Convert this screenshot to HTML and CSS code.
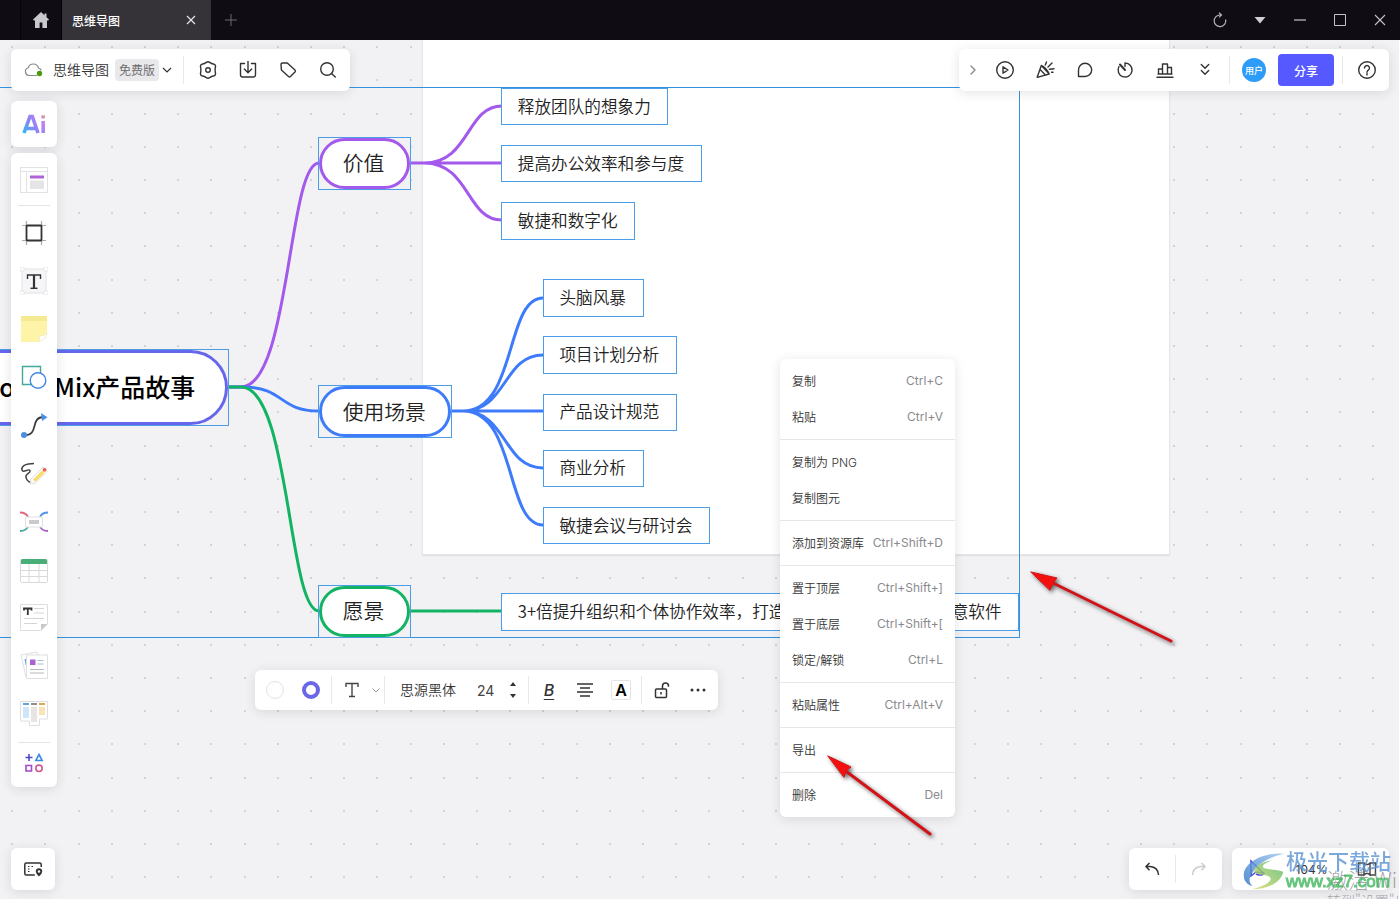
FILE: index.html
```html
<!DOCTYPE html>
<html lang="zh-CN">
<head>
<meta charset="utf-8">
<title>思维导图</title>
<link rel="stylesheet" href="styles.css">
</head>
<body>
<div class="app">
  <header class="titlebar">
    <button class="home" aria-label="主页"><svg width="18" height="18" viewBox="0 0 18 18"><path fill="#c9c8cb" d="M9 1 1 8.600l.8 1H3V17h4.600v-5.500h2.800V17H15V9.600h1.200l.8-1-2.500-2.400V2.500h-2v1.800z"/></svg></button>
    <div class="tab"><span>思维导图</span><button aria-label="关闭标签"><svg width="10" height="10" viewBox="0 0 10 10"><path d="m1 1 8 8M9 1 1 9" stroke="#e4e4e6" stroke-width="1.200"/></svg></button></div>
    <button class="newtab" aria-label="新建标签"><svg width="12" height="12" viewBox="0 0 12 12"><path d="M6 0v12M0 6h12" stroke="#6d6b70"/></svg></button>
    <div class="window-buttons">
      <button aria-label="刷新"><svg width="16" height="16" viewBox="0 0 16 16" fill="none" stroke="#b5b4b8" stroke-width="1.200"><path d="M13.600 7.500A5.800 5.800 0 1 1 8 3h1.500M7 .8 9.500 3 7 5.400"/></svg></button>
      <button aria-label="菜单"><svg width="12" height="8" viewBox="0 0 12 8"><path d="M.5 1h11L6 7.500z" fill="#cfced2"/></svg></button>
      <button aria-label="最小化"><svg width="12" height="12" viewBox="0 0 12 12"><path d="M0 6h12" stroke="#c5c4c8" stroke-width="1.200"/></svg></button>
      <button aria-label="最大化"><svg width="12" height="12" viewBox="0 0 12 12"><path d="M.5.5h11v11H.5z" fill="none" stroke="#c5c4c8"/></svg></button>
      <button aria-label="关闭"><svg width="12" height="12" viewBox="0 0 12 12"><path d="m1 1 10 10M11 1 1 11" stroke="#c5c4c8" stroke-width="1.100"/></svg></button>
    </div>
  </header>

  <main class="canvas">
    <svg class="dots" aria-hidden="true"><defs><pattern id="grid" x="11" y="6" width="166" height="166" patternUnits="userSpaceOnUse">
      <path id="row" fill="#d3d3d6" d="M0 0h2v2H0zM33 0h2v2h-2zM67 0h2v2h-2zM100 0h2v2h-2zM133 0h2v2h-2z"/>
      <use href="#row" y="33"/><use href="#row" y="67"/><use href="#row" y="100"/><use href="#row" y="133"/></pattern></defs>
      <rect width="100%" height="100%" fill="url(#grid)"/></svg>
    <div class="sheet"></div>
    <div class="selection"></div>
    <svg class="edges" width="1400" height="860" viewBox="0 40 1400 860" fill="none" stroke-width="3" aria-hidden="true">
      <g stroke="#a259ec"><path d="M229 387h12C290 387 288 163 319 163M410 163h92M410 163h14C470 163 466 106 502 106M424 163C470 163 466 220 502 220"/></g>
      <g stroke="#3e7bfa"><path d="M229 387h14C285 387 278 411 319 411M451 411h92M463 411C517 411 505 298 543 298M463 411C507 411 503 355 543 355M463 411C507 411 503 468 543 468M463 411C517 411 505 525 543 525"/></g>
      <g stroke="#12b362"><path d="M228 387h13C290 387 288 611 319 611M410 611h92"/></g>
    </svg>
    <div class="map">
      <div class="node root"><span>BoardMix产品故事</span></div>
      <div class="node branch value"><span>价值</span></div>
      <div class="node branch scene"><span>使用场景</span></div>
      <div class="node branch vision"><span>愿景</span></div>
      <div class="node leaf v1"><span>释放团队的想象力</span></div>
      <div class="node leaf v2"><span>提高办公效率和参与度</span></div>
      <div class="node leaf v3"><span>敏捷和数字化</span></div>
      <div class="node leaf s1"><span>头脑风暴</span></div>
      <div class="node leaf s2"><span>项目计划分析</span></div>
      <div class="node leaf s3"><span>产品设计规范</span></div>
      <div class="node leaf s4"><span>商业分析</span></div>
      <div class="node leaf s5"><span>敏捷会议与研讨会</span></div>
      <div class="node leaf g1"><span>3+倍提升组织和个体协作效率，打造新一代多人实时在线创意软件</span></div>
    </div>

    <div class="panel filebar">
      <svg class="cloud" width="20" height="16" viewBox="0 0 20 16" fill="none"><path d="M13 13.500H5A4 4 0 0 1 4.300 5.700 5.300 5.300 0 0 1 14.500 6a3.500 3.500 0 0 1 2.800 2.500" stroke="#8b8b8f" stroke-width="1.200"/><circle cx="15.500" cy="11.500" r="2.700" fill="#4a9a10"/></svg>
      <span class="filename">思维导图</span>
      <button class="plan">免费版</button>
      <button class="chev" aria-label="展开"><svg width="10" height="8" viewBox="0 0 10 8"><path d="m1 2 4 4 4-4" fill="none" stroke="#333" stroke-width="1.200"/></svg></button>
      <i class="rule"></i>
      <button class="tool" aria-label="设置"><svg width="20" height="20" viewBox="0 0 20 20"><path d="M8.300 2.400Q10 1.200 11.700 2.400 13.600 3.900 15.400 4 17.500 4.300 17.600 6.300 17.100 8.200 17.100 10 17.100 11.800 17.600 13.700 17.500 15.700 15.400 16 13.600 16.100 11.700 17.600 10 18.800 8.300 17.600 6.400 16.100 4.600 16 2.500 15.700 2.400 13.700 2.900 11.800 2.900 10 2.900 8.200 2.400 6.300 2.500 4.300 4.600 4 6.400 3.900 8.300 2.400z"/><circle cx="10" cy="10" r="2.300"/></svg></button>
      <button class="tool" aria-label="导出"><svg width="20" height="20" viewBox="0 0 20 20"><path d="M6.500 3.500h-4v11.300q0 2.200 2.200 2.200h10.600q2.200 0 2.200-2.200V3.500h-4M10 1.500v11M6.300 9l3.700 3.700L13.700 9"/></svg></button>
      <button class="tool" aria-label="标签"><svg width="20" height="20" viewBox="0 0 20 20"><path d="M3 4.300Q3 3 4.300 3H9.300L17.200 10.300Q17.700 11 17.200 11.700L12.200 16.800Q11.500 17.400 10.800 16.800L3.400 10z"/></svg></button>
      <button class="tool" aria-label="搜索"><svg width="20" height="20" viewBox="0 0 20 20"><circle cx="9" cy="9" r="6.300"/><path d="m13.500 13.500 3.800 3.600"/></svg></button>
    </div>

    <div class="panel actionbar">
      <button class="tool narrow" aria-label="收起"><svg width="8" height="12" viewBox="0 0 8 12"><path d="m2 2 4 4-4 4" stroke="#8a8a8e"/></svg></button>
      <button class="tool" aria-label="演示"><svg width="20" height="20" viewBox="0 0 20 20"><circle cx="10" cy="10" r="8.300"/><path d="m8 6.800 5 3.200-5 3.200z"/></svg></button>
      <button class="tool" aria-label="庆祝"><svg width="20" height="20" viewBox="0 0 20 20"><path d="M6.300 5.500 2.200 17.300l12-3.300zM5 9.500l5.500 5.400M6.300 5.500q5 2.500 7.900 8.500M10.300 5l1.200-3M13 7l4-4M14.500 9.300 19 8.700M16.500 12.300h1.500"/></svg></button>
      <button class="tool" aria-label="评论"><svg width="20" height="20" viewBox="0 0 20 20"><path d="M3.500 16.500V10a6.600 6.600 0 1 1 6.600 6.500z"/></svg></button>
      <button class="tool" aria-label="计时"><svg width="20" height="20" viewBox="0 0 20 20"><path d="M10 6.500V3a7 7 0 1 1-6 3.500"/><path d="m5 4.500 5 5.500" stroke-width="2"/></svg></button>
      <button class="tool" aria-label="投票"><svg width="20" height="20" viewBox="0 0 20 20"><path d="M2 17.200h16M3.500 14V9h4v5M7.500 14V4h5v10M12.500 14V7.500h4V14M3 14h14"/></svg></button>
      <button class="tool" aria-label="更多工具"><svg width="20" height="20" viewBox="0 0 20 20"><path d="m6.300 4.500 3.700 3.700 3.700-3.700M6.300 10.500l3.700 3.700 3.700-3.700"/></svg></button>
      <i class="rule"></i>
      <button class="avatar">用户</button>
      <button class="share">分享</button>
      <i class="rule"></i>
      <button class="tool" aria-label="帮助"><svg width="20" height="20" viewBox="0 0 20 20"><circle cx="10" cy="10" r="8.300"/><path d="M7.500 8a2.500 2.500 0 1 1 3.800 2.100Q10 11 10 12.200M10 13.500v1.500"/></svg></button>
    </div>

    <nav class="side">
      <button class="panel ai" aria-label="AI"><svg width="28" height="26" viewBox="0 0 28 26"><defs><linearGradient id="aig" gradientUnits="userSpaceOnUse" x1="4" y1="20" x2="26" y2="5"><stop offset="0" stop-color="#3bb4ee"/><stop offset=".4" stop-color="#8d83f7"/><stop offset=".8" stop-color="#c583ee"/><stop offset="1" stop-color="#f5a66d"/></linearGradient></defs><g fill="none" stroke="url(#aig)" stroke-width="3.600"><path d="M4 22 10 5.500h2.400L18 22M7 17.500h8"/><path d="M23.200 10v12M23.200 4.200v3.400"/></g></svg></button>
      <div class="panel toolbox">
        <button aria-label="模板"><svg viewBox="0 0 28 28"><rect x=".5" y="1.500" width="27" height="25" fill="#fff" stroke="#e2e2e5"/><path d="M.5 5.500h27M6.500 5.500v21" stroke="#e2e2e5"/><path d="M10 9.500h14v3H10z" fill="#ae63d8"/><path d="M10 14.500h14V23H10z" fill="#e5e5e8"/></svg></button>
        <i class="hr"></i>
        <button aria-label="画框"><svg viewBox="0 0 28 28" fill="none"><path d="M6.500 6.500h15v15h-15z" stroke="#333" stroke-width="1.800"/><path d="M6.500 2v3M21.500 2v3M6.500 23v3M21.500 23v3M2 6.500h3M2 21.500h3M23 6.500h3M23 21.500h3" stroke="#aaa" stroke-width="1.200"/></svg></button>
        <button aria-label="文本"><svg viewBox="0 0 28 28" fill="none"><path d="M2 2h24v24H2z" fill="#f6f6f8" stroke="#e2e2e5"/><path d="M0 0h4v4H0zM24 0h4v4h-4zM0 24h4v4H0zM24 24h4v4h-4z" fill="#fff" stroke="#e8e8ea"/><path d="M7.500 12V8h13v4" stroke="#333" stroke-width="1.400"/><path d="M14 8v13" stroke="#333" stroke-width="2.200"/><path d="M10.500 21.300h7" stroke="#333" stroke-width="1.400"/></svg></button>
        <button aria-label="便签"><svg viewBox="0 0 28 28"><path d="M1 1h26v17q-1 8-9 9H1z" fill="#fdf4a7"/><path d="M1 1h26v5H1z" fill="#f5e992"/><path d="M18 27q2-2 1.500-6 5 0 7.500-3-1 7-9 9z" fill="#fff" stroke="#e6e1c0" stroke-width=".6"/></svg></button>
        <button aria-label="形状"><svg viewBox="0 0 28 28" fill="#fff" stroke-width="1.400"><path d="M2.500 3.500h18v18h-18z" stroke="#41a89b"/><circle cx="18" cy="17.500" r="7.800" stroke="#4388e8"/></svg></button>
        <button aria-label="连线"><svg viewBox="0 0 28 28"><path d="M4 24c16 1 5-18 20-18" fill="none" stroke="#3b3b3b" stroke-width="1.800"/><circle cx="4" cy="24" r="3" fill="#4b8ee5"/><path d="m21 2 6.500 4.200L22 10z" fill="#4b8ee5"/></svg></button>
        <button aria-label="画笔"><svg viewBox="0 0 28 28" fill="none"><path d="M14 4.500C5 4.500 1 7.500 2 11c1 3.500 7-2 8 .5 1 3-5 3-4 7 .8 3.500 4 5 6 5" stroke="#444" stroke-width="1.500"/><path d="m11 20 12-12 4.500 4L15.500 24l-5 1z" fill="#fff" stroke="#dedede"/><path d="m13 20.500 9-9 2.500 2.500-9 9z" fill="#f8dc70"/><circle cx="24.500" cy="10.800" r="1.900" fill="#eb5e45"/></svg></button>
        <button aria-label="思维导图"><svg viewBox="0 0 28 28" fill="none" stroke-width="1.800"><path d="M0 5.500q6 0 8 4.500" stroke="#e46482"/><path d="M28 5.500q-6 0-8 4.500" stroke="#4e91e8"/><path d="M0 24q6 0 8-4.500" stroke="#3fa99b"/><path d="M28 24q-6 0-8-4.500" stroke="#a65fc8"/><rect x="5.500" y="10" width="17" height="10" rx="1" fill="#fff" stroke="#e0e0e3" stroke-width="1"/><path d="M9 13h10v4H9z" fill="#cacace"/></svg></button>
        <button aria-label="表格"><svg viewBox="0 0 28 28"><rect x=".5" y="4.500" width="27" height="23" rx="1" fill="#fff" stroke="#d9d9dc"/><path d="M9 9v18M19 9v18M1 15.500h26M1 21.500h26" stroke="#d9d9dc"/><path d="M1 5.500Q1 4 2.500 4h23Q27 4 27 5.500V9H1z" fill="#49ad78"/></svg></button>
        <button aria-label="文档"><svg viewBox="0 0 28 28" fill="none"><path d="M.5 1.500h27V21L21 27.500H.5z" fill="#fff" stroke="#dedee1"/><path d="M27.500 21H21v6.500z" fill="#c9c9cd"/><path d="M4 7.500V5.500h7.500v2M7.800 5.500v6.500" stroke="#333" stroke-width="1.800"/><path d="M14 5.500h10M14 10h10M4 15.500h20M4 20.500h13" stroke="#d5d5d9"/></svg></button>
        <button aria-label="卡片"><svg viewBox="0 0 28 28"><path d="m1 4 16-3 5 22-16 3z" fill="#fff" stroke="#e0e0e3"/><path d="M4.500 8h3v6h-2z" fill="#6fa6d8"/><rect x="6.500" y="4" width="21" height="23.500" fill="#fff" stroke="#e0e0e3"/><path d="M10 8.500h5.500V14H10z" fill="#a965cf"/><path d="M17.500 9.500h6M17.500 13h6" stroke="#a9bccd"/><path d="M10 18.500h14M10 22h14" stroke="#b8b8bd"/></svg></button>
        <button aria-label="看板"><svg viewBox="0 0 28 28"><path d="M.5 2.500h27V20h-8v6.500h-10V22h-9z" fill="#fff" stroke="#dedee1"/><path d="M3 4h6v2H3z" fill="#5da3df"/><path d="M11 4h6v2h-6z" fill="#8e8e93"/><path d="M19 4h6v2h-6z" fill="#e0a94b"/><path d="M3 8h6v11H3z" fill="#cfe5f8"/><path d="M11 8h6v15h-6z" fill="#e8e4e4"/><path d="M19 8h6v8h-6z" fill="#fae3b9"/></svg></button>
        <i class="hr"></i>
        <button class="last" aria-label="更多"><svg viewBox="0 0 28 28" fill="none" stroke-width="1.600"><path d="M9 5v7M5.500 8.500h7" stroke="#4c49c9"/><path d="m19 5.500 3.200 6h-6.400z" stroke="#3f8be0"/><path d="M6 16.500h5.500V22H6z" stroke="#a04cc9"/><circle cx="19" cy="19.300" r="3.200" stroke="#d6578f"/></svg></button>
      </div>
    </nav>

    <div class="panel formatbar">
      <button class="slot" aria-label="填充"><svg width="20" height="20" viewBox="0 0 20 20"><circle cx="10" cy="10" r="8.500" fill="#fff" stroke="#e2e2e5"/></svg></button>
      <button class="slot" aria-label="边框"><svg width="20" height="20" viewBox="0 0 20 20"><circle cx="10" cy="10" r="7" fill="#fff" stroke="#6b68e8" stroke-width="4"/></svg></button>
      <i class="rule"></i>
      <button class="slot" aria-label="文字"><svg width="20" height="20" viewBox="0 0 20 20" fill="none" stroke="#444" stroke-width="1.400"><path d="M4 7V3.500h12V7M10 3.500v13M7 16.500h6"/></svg></button>
      <button class="thin" aria-label="文字样式"><svg width="8" height="8" viewBox="0 0 8 8" fill="none" stroke="#999"><path d="m.5 2.500 3.500 3.500 3.500-3.500"/></svg></button>
      <i class="rule"></i>
      <select class="font" aria-label="字体"><option>思源黑体</option></select>
      <input class="size" aria-label="字号" value="24">
      <button class="thin spinner" aria-label="调整字号"><svg width="8" height="18" viewBox="0 0 8 18" fill="#333"><path d="M1 5h6L4 1zM1 13h6l-3 4z"/></svg></button>
      <i class="rule"></i>
      <button class="slot bold">B</button>
      <button class="slot" aria-label="对齐"><svg width="20" height="20" viewBox="0 0 20 20" stroke="#333" stroke-width="1.300"><path d="M2 4h16M5 8h10M2 12h16M5 16h10"/></svg></button>
      <button class="slot color"><span>A</span></button>
      <i class="rule"></i>
      <button class="slot" aria-label="解锁"><svg width="20" height="20" viewBox="0 0 20 20" fill="none" stroke="#333" stroke-width="1.500"><rect x="3.500" y="9" width="11" height="8.500" rx="1"/><path d="M10.500 9V6a3 3 0 0 1 6 0v.8M9 12v2.500"/></svg></button>
      <button class="slot" aria-label="更多"><svg width="18" height="4" viewBox="0 0 18 4" fill="#333"><circle cx="3" cy="2" r="1.500"/><circle cx="9" cy="2" r="1.500"/><circle cx="15" cy="2" r="1.500"/></svg></button>
    </div>

    <div class="panel menu">
      <div class="group"><button><span>复制</span><kbd>Ctrl+C</kbd></button><button><span>粘贴</span><kbd>Ctrl+V</kbd></button></div>
      <div class="group"><button><span>复制为 PNG</span></button><button><span>复制图元</span></button></div>
      <div class="group"><button><span>添加到资源库</span><kbd>Ctrl+Shift+D</kbd></button></div>
      <div class="group"><button><span>置于顶层</span><kbd>Ctrl+Shift+]</kbd></button><button><span>置于底层</span><kbd>Ctrl+Shift+[</kbd></button><button><span>锁定/解锁</span><kbd>Ctrl+L</kbd></button></div>
      <div class="group"><button><span>粘贴属性</span><kbd>Ctrl+Alt+V</kbd></button></div>
      <div class="group"><button><span>导出</span></button></div>
      <div class="group"><button><span>删除</span><kbd>Del</kbd></button></div>
    </div>

    <button class="panel minimap" aria-label="页面"><svg width="20" height="20" viewBox="0 0 20 20" fill="none" stroke="#333" stroke-width="1.500"><path d="M18.200 8V5.500q0-1.500-1.500-1.500H3.300Q1.800 4 1.800 5.500v9q0 1.500 1.500 1.500h8.500"/><path d="M5 7.500h1.500M5 10h1.500M5 12.500h1.500M8.500 7.500H10" stroke-width="1.200"/><path d="M16 17.500q-3.200-3-3.200-5a3.200 3.200 0 0 1 6.400 0q0 2-3.200 5z" fill="#333" stroke="none"/><circle cx="16" cy="12.500" r="1.200" fill="#fff" stroke="none"/></svg></button>

    <div class="corner">
      <div class="panel history">
        <button aria-label="撤销"><svg width="18" height="18" viewBox="0 0 18 18" fill="none" stroke="#333" stroke-width="1.500"><path d="M6.500 3 3 6.500l3.500 3.700M3 6.500h4Q15 7 15.500 15"/></svg></button>
        <i class="rule"></i>
        <button aria-label="重做"><svg width="18" height="18" viewBox="0 0 18 18" fill="none" stroke="#ccc" stroke-width="1.500"><path d="M11.500 3 15 6.500l-3.500 3.700M15 6.500h-4Q3 7 2.500 15"/></svg></button>
      </div>
      <div class="panel zoombar">
        <button aria-label="选择"><svg width="18" height="20" viewBox="0 0 18 20" fill="none" stroke="#4a4ae0" stroke-width="1.500"><path d="M3 2v15l5-4 7 1zM8 15q7 3 8-2"/></svg></button>
        <button class="percent">104%</button>
        <button aria-label="导航"><svg width="20" height="16" viewBox="0 0 20 16" fill="none" stroke="#444" stroke-width="1.400"><path d="M7 14H1.500V2H7v12l2-1.500h2l2 1.500V2h5.500v12H13M7 2l2 1.500h2L13 2"/></svg></button>
      </div>
    </div>

    <div class="activate"><p>激活 Windows</p><small>转到"设置"以激活</small></div>
    <div class="brand">
      <svg width="46" height="40" viewBox="0 0 48 40"><defs><linearGradient id="bl" x1="0" y1="1" x2="1" y2="0"><stop offset="0" stop-color="#2a6fc4"/><stop offset="1" stop-color="#9cc8ee"/></linearGradient><linearGradient id="gr" x1="0" y1="1" x2="1" y2="0"><stop offset="0" stop-color="#e0d96a"/><stop offset="1" stop-color="#4cb866"/></linearGradient></defs><path d="M46 2C24 0 3 12 4 25c0 5 3 9 9 11-4-4-4-9 0-14C18 13 29 6 46 2z" fill="url(#bl)"/><path d="M33 9C22 10 13 17 15 21c3 4 17 2 17 7 0 4-8 8-20 11 17 0 31-7 33-18-5-3-18-2-21-5-1-2 3-5 9-7z" fill="url(#gr)"/></svg>
      <div><strong>极光下载站</strong><span>www.xz7.com</span></div>
    </div>
    <svg class="arrows" width="1400" height="860" viewBox="0 40 1400 860" aria-hidden="true"><g class="arrow"><path d="M1053 583 1171 641"/><path d="m1031 572 26 6-4 5-3 7z" class="head"/></g><g class="arrow"><path d="M847 772 930 834"/><path d="m828 756 23 11-5 4-2 6z" class="head"/></g></svg>
  </main>
</div>
</body>
</html>
```

FILE: styles.css
```css
* { box-sizing: border-box; }
body { margin: 0; color: #333; font-family: Inter, "Noto Sans CJK SC", sans-serif; font-size: 12px; }
button, input, select { margin: 0; padding: 0; border: 0; background: none; font: inherit; color: inherit; appearance: none; }
button { display: flex; align-items: center; justify-content: center; cursor: pointer; }
svg { display: block; flex: none; }
.app { display: grid; grid-template-rows: 40px 1fr; height: 100vh; }

.titlebar { display: flex; background: #0f0c13; padding-left: 20px; }
.home { width: 42px; border: solid #050407; border-width: 0 1px; }
.tab { display: flex; align-items: center; justify-content: space-between; width: 149px; padding: 0 15px 0 10px; background: #353338; color: #fff; font-weight: 500; }
.newtab { width: 40px; }
.window-buttons { display: flex; margin-left: auto; }
.window-buttons button { width: 40px; }

.canvas { position: relative; overflow: hidden; background: #f2f2f4; border: solid #fff; border-width: 0 1px 1px 0; }
.dots { position: absolute; width: 100%; height: 100%; }
.sheet { position: absolute; left: 422px; top: 0; width: 748px; height: 515px; background: #fff; border: solid #e6e6e9; border-width: 0 1px 1px; box-shadow: 0 1px 1px #e2e2e5; }
.selection { position: absolute; left: 0; top: 47px; width: 1020px; height: 551px; border: solid #3193e0; border-width: 1px 1px 1px 0; }
.edges, .arrows { position: absolute; left: 0; top: 0; }

/* The board is shown at 104% */
.map { position: absolute; left: 0; top: 0; zoom: 1.04; font-family: "Noto Sans CJK SC", sans-serif; font-weight: 350; color: #222; white-space: nowrap; }
.node { position: absolute; border: 1px solid #4a9ee8; }
.node span { display: flex; align-items: center; justify-content: center; height: 100%; padding: 0 2px 2px 0; background: #fff; }
.root { left: -47px; top: 297px; width: 267px; height: 74px; font-size: 24px; font-weight: 500; color: #000; }
.root span { border: 3px solid #6566ec; border-radius: 40px; }
.branch { left: 306px; width: 89px; height: 51px; font-size: 20px; }
.branch span { border: 3px solid #a259ec; border-radius: 26px; }
.value { top: 93px; }
.scene { top: 332px; width: 129px; }
.scene span { border-color: #3e7bfa; }
.vision { top: 524px; }
.vision span { border-color: #12b362; }
.leaf { height: 36px; font-size: 16px; }
.leaf span { padding: 0 16px 2px 15px; border-radius: 6px; }
.v1, .v2, .v3, .g1 { left: 482px; }
.s1, .s2, .s3, .s4, .s5 { left: 522px; }
.v1 { top: 46px; }
.v2 { top: 101px; }
.v3 { top: 156px; }
.s1 { top: 230px; }
.s2 { top: 285px; }
.s3 { top: 340px; }
.s4 { top: 394px; }
.s5 { top: 449px; }
.g1 { top: 532px; }

.panel { background: #fff; border-radius: 6px; box-shadow: 0 2px 12px rgba(30, 30, 50, .12); }
.rule { flex: none; width: 1px; height: 28px; background: #e8e8ea; }
.tool { width: 40px; height: 42px; }
.tool svg { fill: none; stroke: #333; stroke-width: 1.4; stroke-linejoin: round; stroke-linecap: round; }
.narrow { width: 24px; }

.filebar, .actionbar { position: absolute; top: 9px; display: flex; align-items: center; height: 42px; }
.filebar { left: 11px; padding: 0 2px 0 13px; }
.filename { margin: 0 6px 0 9px; padding-bottom: 2px; font-size: 14px; font-weight: 350; }
.plan { width: 44px; height: 22px; padding-bottom: 2px; border-radius: 4px; background: #e9e9ec; color: #666; font-weight: 350; }
.chev { width: 16px; height: 22px; }
.filebar .rule { margin: 0 4px 0 8px; }
.actionbar { right: 10px; padding: 0 2px; }
.actionbar .rule { margin: 0 4px; }
.avatar { width: 24px; height: 24px; margin: 0 12px 0 8px; border-radius: 50%; background: #2d9cf8; color: #fff; font-size: 9px; font-weight: 500; }
.share { width: 56px; height: 32px; margin-right: 4px; border-radius: 4px; background: #5559ff; color: #fff; font-weight: 500; }

.side { position: absolute; left: 11px; top: 61px; display: flex; flex-direction: column; gap: 6px; width: 46px; }
.ai { height: 46px; }
.toolbox { padding: 3px 0 4px; }
.toolbox button { width: 46px; height: 48px; }
.toolbox button svg { width: 28px; height: 28px; }
.toolbox .last { height: 40px; }
.hr { display: block; height: 1px; margin: 1px 7px 3px; background: #e4e4e7; }
.hr:nth-last-of-type(1) { margin: 5px 7px 0; }

.formatbar { position: absolute; left: 255px; top: 630px; display: flex; align-items: center; height: 40px; padding: 0 2px; }
.formatbar .rule { margin: 0 2px; }
.slot { width: 36px; height: 36px; }
.thin { width: 12px; height: 36px; }
.spinner { margin-right: 7px; }
.font { width: 77px; margin-left: 13px; padding-bottom: 2px; font-size: 14px; font-weight: 350; }
.size { width: 30px; font-size: 14px; color: #444; }
.bold { font-size: 16px; font-style: italic; font-weight: 500; text-decoration: underline; text-underline-offset: 3px; }
.color span { width: 20px; height: 20px; border: 1px solid #e4e4e7; border-radius: 2px; color: #000; font-size: 16px; font-weight: 600; line-height: 19px; }

.menu { position: absolute; left: 780px; top: 319px; width: 175px; }
.group { padding: 4px 0; }
.group + .group { border-top: 1px solid #e6e6e8; }
.group button { justify-content: space-between; width: 100%; height: 36px; padding: 0 12px 2px; white-space: nowrap; font-weight: 350; }
kbd { color: #8a8a8e; font-family: Inter, sans-serif; font-weight: 400; }

.minimap { position: absolute; left: 11px; bottom: 9px; width: 44px; height: 42px; }
.corner { position: absolute; right: 10px; bottom: 9px; display: flex; gap: 10px; height: 42px; }
.history, .zoombar { display: flex; align-items: center; }
.history button { width: 46px; height: 42px; }
.zoombar { width: 157px; padding: 0 12px 0 16px; justify-content: space-between; }

.activate { position: absolute; left: 1327px; bottom: -10px; color: rgba(110, 110, 115, .6); white-space: nowrap; font-family: "Noto Sans CJK SC", sans-serif; font-weight: 300; }
.activate p { margin: 0; font-size: 21px; line-height: 24px; }
.activate small { display: block; font-size: 14px; line-height: 18px; }
.brand { position: absolute; right: 8px; bottom: 6px; display: flex; align-items: center; opacity: .8; }
.brand strong, .brand span { display: block; font-family: "Noto Sans CJK SC", sans-serif; }
.brand strong { color: #5b93d3; font-size: 21px; line-height: 22px; font-weight: 500; }
.brand span { color: #3fb65c; font-family: "Liberation Sans", sans-serif; font-size: 17px; line-height: 22px; -webkit-text-stroke: 1px; }

.arrow { fill: none; stroke: #d31217; stroke-width: 3; stroke-linecap: round; filter: drop-shadow(2px 2px 2px rgba(0, 0, 0, .6)); }
.head { fill: #f3110f; stroke-width: 1; }
```
